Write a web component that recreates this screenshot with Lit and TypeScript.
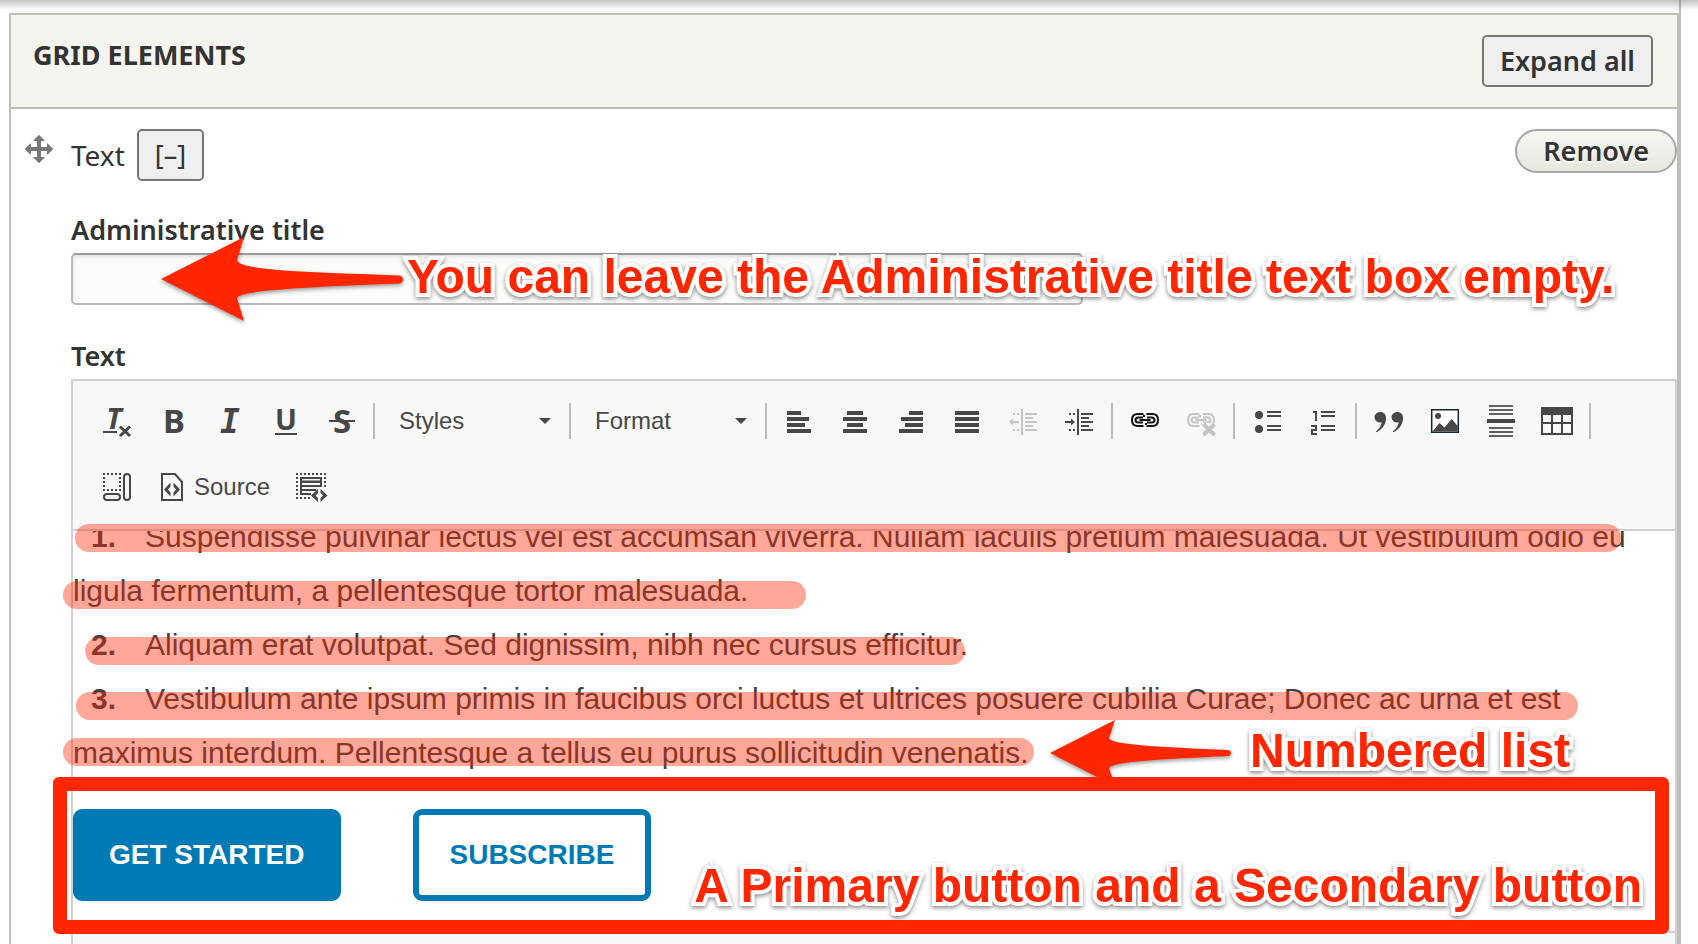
import { LitElement, html, css, svg, nothing, type TemplateResult } from "lit";
import { customElement, property } from "lit/decorators.js";

const rows = (list: number[][]) =>
  list.map(([x, y, w, h]) => svg`<rect x=${x} y=${y} width=${w} height=${h ?? 2}></rect>`);

const indentBody = rows([
  [14, 4, 2, 26], [6, 8, 2], [10, 8, 2], [6, 24, 2], [10, 24, 2],
  [18, 8, 12], [18, 12, 8], [18, 16, 12], [18, 20, 8], [18, 24, 12],
]);

const chain = svg`
  <g fill="none" stroke="currentColor" stroke-width="2">
    <path d="M14.500 9H8.500C4.500 9 3 11.500 3 15s1.500 6 5.500 6h6M17.500 9h6c4 0 5.500 2.500 5.500 6s-1.500 6-5.500 6h-6"></path>
    <path d="M14 12.500H9.500C7.500 12.500 6.500 13.500 6.500 15s1 2.500 3 2.500H14M18 12.500h4.500c2 0 3 1 3 2.500s-1 2.500-3 2.500H18"></path>
    <path d="M10.500 15h11M15 10v2M17 18v2"></path>
  </g>`;

const letter = (t: string, cls: string, y = 28) =>
  svg`<text class=${cls} x="17" y=${y} text-anchor="middle">${t}</text>`;

const ICONS: Record<string, TemplateResult | TemplateResult[]> = {
  clear: svg`<text class="glyph slant small" x="13" y="24" text-anchor="middle">T</text>
    <path d="M2 26h14v2H2z"></path>
    <path d="M19 21.500l10 9.500M29 21.500l-10 9.500" stroke="currentColor" stroke-width="3" fill="none"></path>`,
  bold: letter("B", "glyph"),
  italic: letter("I", "glyph slant mono"),
  underline: svg`<text class="glyph medium" x="17" y="25" text-anchor="middle">U</text><path d="M6 28h22v2H6z"></path>`,
  strike: svg`${letter("S", "glyph")}<path d="M4 15h26v2H4z"></path>`,
  left: rows([[4, 6, 14, 4], [4, 12, 22, 4], [4, 18, 18, 4], [4, 24, 24, 4]]),
  center: rows([[8, 6, 16, 4], [4, 12, 24, 4], [8, 18, 16, 4], [4, 24, 24, 4]]),
  right: rows([[14, 6, 14, 4], [6, 12, 22, 4], [10, 18, 18, 4], [4, 24, 24, 4]]),
  justify: rows([[4, 6, 24, 4], [4, 12, 24, 4], [4, 18, 24, 4], [4, 24, 24, 4]]),
  outdent: svg`${indentBody}<path d="M2 17l4-3.500V16h6v2H6v2.500z"></path>`,
  indent: svg`${indentBody}<path d="M12 17l-4-3.500V16H2v2h6v2.500z"></path>`,
  link: svg`<g class="ink">${chain}</g>`,
  unlink: svg`${chain}<path d="M17 18h15v13H17z" fill="#f8f8f8"></path>
    <path d="M18.500 19l11 11M29.500 19l-11 11" stroke="currentColor" stroke-width="4" fill="none"></path>`,
  bullets: svg`<circle cx="8" cy="10" r="4"></circle><circle cx="8" cy="24" r="4"></circle>
    ${rows([[16, 6, 14], [16, 10, 14], [16, 20, 14], [16, 24, 14]])}`,
  numbers: svg`<path d="M6 6h4v10H8V8H6zM4 20h6v6H6v2h4v2H4v-6h4v-2H4z"></path>
    ${rows([[14, 6, 14], [14, 10, 14], [14, 20, 14], [14, 24, 14]])}`,
  quote: svg`<path d="M7.500 7a5.300 5.300 0 1 0 1.300 10.200C8 21 6 24 2.800 26.400l.8.8C9.500 24 13 19 13 13 13 9.200 10.500 7 7.500 7z"></path>
    <path d="M24.500 7a5.300 5.300 0 1 0 1.300 10.200C25 21 23 24 19.800 26.400l.8.8C26.500 24 30 19 30 13 30 9.200 27.500 7 24.500 7z"></path>`,
  image: svg`<path d="M2.700 4.700h26.600v22.600H2.700z" fill="#fff" stroke="#14282c" stroke-width="1.500"></path>
    <circle cx="9" cy="11" r="3"></circle><path d="M3.500 26.500l7-8.500 5 4.500 7.200-8.500 6 7v5.500z"></path>`,
  rule: svg`<g opacity=".85">${rows([[4, 0, 24], [4, 4, 24], [4, 8, 24], [4, 22, 24], [4, 26, 24], [4, 30, 24]])}</g>
    ${rows([[2, 14, 28, 4]])}`,
  table: svg`<path fill-rule="evenodd" d="M0 2h32v28H0zM2 10v7h8v-7zM12 10v7h8v-7zM22 10v7h8v-7zM2 19v9h8v-9zM12 19v9h8v-9zM22 19v9h8v-9z"></path>`,
  blocks: svg`<g fill="none" stroke="currentColor" stroke-width="2">
      <path d="M2 3h18M2 19h18" stroke-dasharray="2 2"></path>
      <path d="M3 6v12M19 6v12" stroke-dasharray="2 2"></path>
      <rect x="3" y="23" width="16" height="6" rx="3"></rect><rect x="23" y="3" width="6" height="26" rx="3"></rect></g>`,
  source: svg`<path d="M5 3h13l7 8v18H5z" fill="none" stroke="currentColor" stroke-width="2"></path>
    <path d="M13.500 11.500v4L11 18.500l2.500 3v4L7 18.500zM16.500 11.500v4l2.500 3-2.500 3v4l6.500-7z"></path>`,
  templates: svg`<g fill="none" stroke="currentColor" stroke-width="2">
      <path d="M2 3h30M2 27h14" stroke-dasharray="2 2"></path><path d="M3 6v20M31 6v11" stroke-dasharray="2 2"></path></g>
    <path fill-rule="evenodd" d="M6 6h22v10H8v2h14v2H8v2h9v2H6zM8 8v1.500h18V8zM8 12v2h18v-2z"></path>
    <path d="M24 18v4l-2.500 2.500L24 27v4l-7-6.500zM26.500 18v4l2.500 2.500-2.500 2.500v4l7-6.500z"></path>`,
};

@customElement("tool-icon")
export class ToolIcon extends LitElement {
  static styles = css`
    :host { display: block; width: 32px; height: 32px; }
    .icon { display: block; width: 32px; height: 32px; fill: currentColor; overflow: visible; }
    .glyph { font: 700 33px "Noto Sans", sans-serif; }
    .medium { font-size: 29px; }
    .small { font-size: 29px; }
    .slant { font-style: italic; }
    .mono { font-family: "DejaVu Sans Mono", monospace; }
    .ink { color: #111; }
  `;
  @property() name = "";
  render() {
    return html`<svg class="icon" viewBox="0 0 32 32" aria-hidden="true">${ICONS[this.name]}</svg>`;
  }
}

@customElement("call-out")
export class CallOut extends LitElement {
  static styles = css`
    :host { display: flex; align-items: center; white-space: nowrap; }
    .arrow { display: block; flex: none; overflow: visible; fill: #ff2600; filter: drop-shadow(0 2px 2px rgba(0, 0, 0, 0.4)); }
    .words {
      padding-bottom: 4px;
      font: 700 48px/56px "Liberation Sans", Arial, sans-serif;
      color: #ff2600;
      -webkit-text-stroke: 8px #fff;
      stroke-linejoin: round;
      paint-order: stroke fill;
      filter: drop-shadow(0 2px 2px rgba(0, 0, 0, 0.45));
    }
  `;
  @property() arrow: "" | "long" | "short" = "";
  render() {
    const shape =
      this.arrow === "long"
        ? svg`<svg class="arrow" width="242" height="84" viewBox="0 0 242 84">
            <path d="M0 42L83 0L76 23C78 34 150 35 238 38.500Q242 39 242 42.500T238 46.500C150 50 78 53 76 61L83 84z"></path></svg>`
        : this.arrow === "short"
          ? svg`<svg class="arrow" width="181" height="66" viewBox="0 0 181 66">
            <path d="M0 33L65 0L59 18C61 25 110 27 178 30Q181 30.500 181 33T178 36C110 39 61 42 59 48L65 66z"></path></svg>`
          : nothing;
    return html`${shape}<span class="words"><slot></slot></span>`;
  }
}

const BUTTON_LABELS: Record<string, string> = {
  clear: "Remove format", bold: "Bold", italic: "Italic", underline: "Underline", strike: "Strikethrough",
  left: "Align left", center: "Center", right: "Align right", justify: "Justify",
  outdent: "Decrease indent", indent: "Increase indent", link: "Link", unlink: "Unlink",
  bullets: "Bulleted list", numbers: "Numbered list", quote: "Block quote", image: "Image",
  rule: "Horizontal line", table: "Table", blocks: "Show blocks", templates: "Templates",
};

const ITEMS = [
  "Suspendisse pulvinar lectus vel est accumsan viverra. Nullam iaculis pretium malesuada. Ut vestibulum odio eu ligula fermentum, a pellentesque tortor malesuada.",
  "Aliquam erat volutpat. Sed dignissim, nibh nec cursus efficitur.",
  "Vestibulum ante ipsum primis in faucibus orci luctus et ultrices posuere cubilia Curae; Donec ac urna et est maximus interdum. Pellentesque a tellus eu purus sollicitudin venenatis.",
];

@customElement("app-root")
export class AppRoot extends LitElement {
  static styles = css`
    :host {
      display: block; position: relative; height: 100vh; overflow: hidden; background: #fff;
      font: 600 27px/40px "Noto Sans", "Open Sans", sans-serif; color: #333;
    }
    * { box-sizing: border-box; }
    .shade {
      position: absolute; inset: 0 0 auto; height: 10px; pointer-events: none;
      background: linear-gradient(rgba(0, 0, 0, 0.24), rgba(0, 0, 0, 0.14) 40%, rgba(0, 0, 0, 0));
    }
    .pane { margin: 0 17px 0 9px; padding-top: 13px; border-right: 2px solid #bfbfba; }
    .panel { border: 2px solid #bfbfba; }
    .head {
      display: flex; justify-content: space-between; align-items: flex-start;
      padding: 20px 24px 20px 22px; background: #f5f5f0; border-bottom: 2px solid #bfbfba;
    }
    .title { margin: 0; font: inherit; font-weight: 700; }
    .plain {
      height: 52px; padding: 0 16px; border: 2px solid #767676; border-radius: 5px;
      background: #efefef; font: inherit; color: inherit;
    }
    .item { display: grid; grid-template-columns: 32px minmax(0, 1fr); column-gap: 16px; padding: 20px 0 0 12px; }
    .handle { display: block; width: 32px; height: 32px; margin-top: 4px; fill: #787878; }
    .bar { display: flex; align-items: flex-start; gap: 12px; }
    .kind { font-size: 28px; font-weight: 400; line-height: 52px; }
    .toggle { font-weight: 400; }
    .remove {
      height: 44px; margin-left: auto; padding: 0 26px; border: 2px solid #a6a6a6; border-radius: 22px;
      background: linear-gradient(#f6f6f3, #e7e7df); font: inherit; color: inherit; text-shadow: 0 2px #fff;
    }
    .field { display: grid; row-gap: 5px; margin-top: 31px; }
    .label { line-height: 36px; }
    .entry { position: relative; margin-bottom: 2px; }
    .input {
      display: block; width: 100%; max-width: 1012px; height: 52px; padding: 0 14px; font: inherit;
      border: 2px solid #b8b8b8; border-top-color: #999; border-radius: 5px; background: #fcfcfa;
      box-shadow: inset 0 2px 4px rgba(0, 0, 0, 0.12);
    }
    .note-title { position: absolute; left: 90px; top: -16px; gap: 4px; }
    .editor {
      border: 2px solid #d1d1d1; background: #f8f8f8; color: #474747;
      font: 400 24px/32px "Liberation Sans", Arial, sans-serif;
    }
    .tools { display: flex; flex-wrap: wrap; row-gap: 10px; padding: 12px 16px 14px; border-bottom: 2px solid #d1d1d1; }
    .group { display: flex; align-items: center; }
    .sep { width: 2px; height: 36px; margin: 0 4px; background: #bcbcbc; }
    .tool {
      display: flex; align-items: center; gap: 5px; padding: 12px; border: 0; background: none;
      font: inherit; color: inherit;
    }
    .tool[disabled] { color: #c4c4c4; }
    .combo { display: grid; align-items: center; width: 186px; }
    .pick {
      grid-area: 1 / 1; appearance: none; width: 100%; height: 56px; padding: 0 30px 0 20px; border: 0;
      background: none; font: inherit; color: inherit;
    }
    .caret { grid-area: 1 / 1; justify-self: end; width: 12px; height: 6px; margin-right: 14px; fill: #474747; pointer-events: none; }
    .body { position: relative; background: #fff; }
    .page { height: 400px; overflow: hidden; color: #404040; font-size: 30px; line-height: 54px; }
    .list { margin: -21px 0 29px; padding: 0 16px 0 0; list-style: none; }
    .num { display: inline-block; width: 72px; padding-left: 18px; font-weight: 700; }
    .actions { display: flex; gap: 72px; }
    .cta {
      padding: 13px 31px 13px 30px; border: 6px solid #007ab5; border-radius: 9px; font-size: 28px; font-weight: 700;
      text-decoration: none; text-transform: uppercase; color: #007ab5;
    }
    .primary { background: #007ab5; color: #fff; }
    .mark { position: absolute; height: 28px; border-radius: 14px; background: rgba(255, 38, 0, 0.4); }
    .m1 { top: -7px; left: 2px; width: 1546px; }
    .m2 { top: 50px; left: -10px; width: 743px; }
    .m3 { top: 106px; left: 12px; width: 880px; }
    .m4 { top: 161px; left: 3px; width: 1502px; }
    .m5 { top: 207px; left: -10px; width: 971px; }
    .note-list { position: absolute; left: 977px; top: 189px; gap: 19px; }
    .frame {
      position: absolute; inset: 246px 6px -3px -20px; display: flex; justify-content: flex-end; align-items: flex-end;
      padding: 0 13px 2px; border: 14px solid #ff2600; border-radius: 6px;
    }
    .foot { height: 60px; border-top: 2px solid #d1d1d1; }
  `;

  private tool(name: string) {
    return html`<button class="tool" type="button" aria-label=${BUTTON_LABELS[name]}
      ?disabled=${name === "outdent" || name === "unlink"}><tool-icon name=${name}></tool-icon></button>`;
  }

  private group(...names: string[]) {
    return html`<div class="group">${names.map((n) => this.tool(n))}<span class="sep"></span></div>`;
  }

  private combo(name: string) {
    return html`<div class="group"><div class="combo">
      <select class="pick" aria-label=${name}><option>${name}</option></select>
      <svg class="caret" viewBox="0 0 12 6" aria-hidden="true"><path d="M0 0h12L6 6z"></path></svg>
    </div><span class="sep"></span></div>`;
  }

  render() {
    return html`
      <main class="pane">
        <section class="panel">
          <header class="head">
            <h2 class="title">GRID ELEMENTS</h2>
            <button class="plain" type="button">Expand all</button>
          </header>
          <div class="item">
            <svg class="handle" viewBox="0 0 16 16" aria-hidden="true">
              <path d="M14.904 7.753l-2.373-2.372c-.291-.292-.531-.193-.531.22v1.399h-3v-3h1.398c.414 0 .512-.24.221-.53l-2.371-2.372c-.137-.136-.36-.136-.497 0l-2.372 2.372c-.292.292-.193.53.22.53h1.401v3h-3v-1.369c0-.413-.239-.511-.531-.22l-2.371 2.342c-.136.136-.136.359 0 .494l2.372 2.372c.292.291.531.191.531-.22v-1.399h3v3h-1.398c-.413 0-.513.239-.221.53l2.372 2.371c.135.138.358.138.494 0l2.372-2.371c.291-.292.194-.53-.221-.53h-1.400v-3h3v1.398c0 .413.24.513.531.221l2.372-2.372c.137-.136.137-.359 0-.494z"></path>
            </svg>
            <div>
              <div class="bar">
                <span class="kind">Text</span>
                <button class="plain toggle" type="button">[–]</button>
                <button class="remove" type="button">Remove</button>
              </div>
              <div class="field">
                <label class="label" for="admin-title">Administrative title</label>
                <div class="entry">
                  <input class="input" id="admin-title" type="text" />
                  <call-out class="note-title" arrow="long">You can leave the Administrative title text box empty.</call-out>
                </div>
              </div>
              <div class="field">
                <span class="label" id="text-label">Text</span>
                <div class="editor" role="group" aria-labelledby="text-label">
                  <div class="tools" role="toolbar">
                    ${this.group("clear", "bold", "italic", "underline", "strike")}
                    ${this.combo("Styles")} ${this.combo("Format")}
                    ${this.group("left", "center", "right", "justify", "outdent", "indent")}
                    ${this.group("link", "unlink")} ${this.group("bullets", "numbers")}
                    ${this.group("quote", "image", "rule", "table")}
                    <div class="group">
                      ${this.tool("blocks")}
                      <button class="tool" type="button"><tool-icon name="source"></tool-icon>Source</button>
                      ${this.tool("templates")}
                    </div>
                  </div>
                  <div class="body">
                    <div class="page">
                      <ol class="list">
                        ${ITEMS.map((t, i) => html`<li><span class="num">${i + 1}.</span>${t}</li>`)}
                      </ol>
                      <div class="actions">
                        <a class="cta primary" href="#start">Get started</a>
                        <a class="cta" href="#subscribe">Subscribe</a>
                      </div>
                    </div>
                    ${[1, 2, 3, 4, 5].map((n) => html`<span class="mark m${n}"></span>`)}
                    <call-out class="note-list" arrow="short">Numbered list</call-out>
                    <div class="frame"><call-out>A Primary button and a Secondary button</call-out></div>
                  </div>
                  <div class="foot"></div>
                </div>
              </div>
            </div>
          </div>
        </section>
      </main>
      <div class="shade"></div>
    `;
  }
}
